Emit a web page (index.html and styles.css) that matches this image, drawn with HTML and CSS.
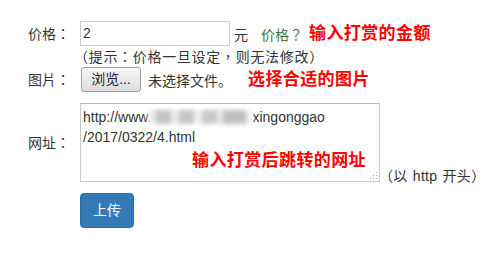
FILE: index.html
```html
<!DOCTYPE html>
<html lang="zh-CN">
<head>
<meta charset="utf-8">
<title>打赏设置</title>
<link rel="stylesheet" href="styles.css">
</head>
<body>
<form class="form">
  <div class="lbl">价格：</div>
  <div class="line">
    <span class="price-input">2</span>
    <span class="unit">元</span>
    <span class="green">价格？</span>
    <span class="note">输入打赏的金额</span>
  </div>

  <div></div>
  <div class="hint">（提示：价格一旦设定，则无法修改）</div>

  <div class="lbl lbl-file">图片：</div>
  <div class="line line-file">
    <span class="browse">浏览...</span>
    <span class="nofile">未选择文件。</span>
    <span class="note note-file">选择合适的图片</span>
  </div>

  <div class="lbl lbl-url">网址：</div>
  <div class="line line-url">
    <div class="textarea">
      <div class="ta-text">http://www.<span class="blur"></span>xingonggao<br>/2017/0322/4.html</div>
      <span class="note note-url">输入打赏后跳转的网址</span>
      <svg class="grip" width="8" height="8" viewBox="0 0 8 8">
        <rect x="6" y="0" width="1" height="1" fill="#aaa"/>
        <rect x="3" y="3" width="1" height="1" fill="#aaa"/>
        <rect x="6" y="3" width="1" height="1" fill="#aaa"/>
        <rect x="0" y="6" width="1" height="1" fill="#aaa"/>
        <rect x="3" y="6" width="1" height="1" fill="#aaa"/>
        <rect x="6" y="6" width="1" height="1" fill="#aaa"/>
      </svg>
    </div>
    <span class="url-hint">（以 http 开头）</span>
  </div>

  <div></div>
  <div class="line-submit">
    <button type="button" class="btn-primary">上传</button>
  </div>
</form>
</body>
</html>
```

FILE: styles.css
```css
html, body {
  margin: 0;
  padding: 0;
  background: #fff;
}

body {
  font-family: "Liberation Sans", "Noto Sans CJK TC", sans-serif;
  font-size: 14px;
  color: #333;
  text-spacing-trim: space-all;
  font-feature-settings: "locl" 0;
}

.form {
  display: grid;
  grid-template-columns: 52px auto;
  align-items: center;
  padding: 21px 0 0 28px;
}

.lbl {
  line-height: 20px;
  white-space: nowrap;
}

.line {
  display: flex;
  align-items: center;
  white-space: nowrap;
}

.price-input {
  box-sizing: border-box;
  width: 150px;
  height: 25px;
  border: 1px solid #ccc;
  padding: 0 2px;
  line-height: 23px;
  color: #333;
  background: #fff;
}

.unit {
  margin-left: 4px;
}

.green {
  margin-left: 13px;
  color: #3c763d;
}

.note {
  color: #ff0000;
  font-family: "Liberation Sans", "Noto Sans CJK SC", sans-serif;
  font-weight: 700;
  font-size: 17px;
  letter-spacing: 0.4px;
  line-height: 20px;
}

.line .note {
  margin-left: 6px;
}

.hint {
  margin-left: -6px;
  padding-top: 3px;
  line-height: 17px;
  letter-spacing: 0.7px;
  white-space: nowrap;
}

.lbl-file,
.line-file {
  margin-top: 1px;
}

.browse {
  box-sizing: border-box;
  margin-left: 1px;
  width: 60px;
  height: 25px;
  border: 1px solid #a0a0a0;
  border-radius: 3px;
  background: linear-gradient(#f7f7f7, #dcdcdc);
  text-align: center;
  line-height: 23px;
  color: #222;
}

.nofile {
  margin-left: 7px;
  font-family: "Liberation Sans", "Noto Sans CJK SC", sans-serif;
  font-feature-settings: normal;
}

.line .note-file {
  margin-left: 16px;
}

.lbl-url,
.line-url {
  margin-top: 11px;
}

.line-url {
  align-items: flex-end;
}

.textarea {
  position: relative;
  box-sizing: border-box;
  width: 300px;
  height: 79px;
  border: 1px solid #c8c8c8;
  border-top-color: #b8b8b8;
  background: #fff;
}

.ta-text {
  padding: 3px 2px;
  line-height: 20px;
  color: #333;
}

.blur {
  display: inline-block;
  width: 104px;
  height: 14px;
  margin-left: -3px;
  vertical-align: -2px;
  background: linear-gradient(90deg,
    #ececec 0 8%, #c4c4c4 8% 22%, #ececec 22% 30%,
    #c6c6c6 30% 44%, #efefef 44% 52%, #cacaca 52% 66%,
    #e6e6e6 66% 72%, #c0c0c0 72% 94%, #f0f0f0 94% 100%);
  filter: blur(2.2px);
}

.note-url {
  position: absolute;
  top: 47px;
  right: 13px;
}

.grip {
  position: absolute;
  right: 1px;
  bottom: 1px;
}

.url-hint {
  margin-left: -1px;
  line-height: 14px;
  margin-bottom: -1px;
  letter-spacing: 0.3px;
  word-spacing: 1px;
}

.line-submit {
  margin-top: 11px;
}

.btn-primary {
  box-sizing: border-box;
  height: 35px;
  padding: 0 12px;
  border: 1px solid #2e6da4;
  border-radius: 4px;
  background: #337ab7;
  color: #fff;
  font-family: "Liberation Sans", "Noto Sans CJK SC", sans-serif;
  font-size: 14px;
  line-height: 33px;
  cursor: pointer;
}
```
